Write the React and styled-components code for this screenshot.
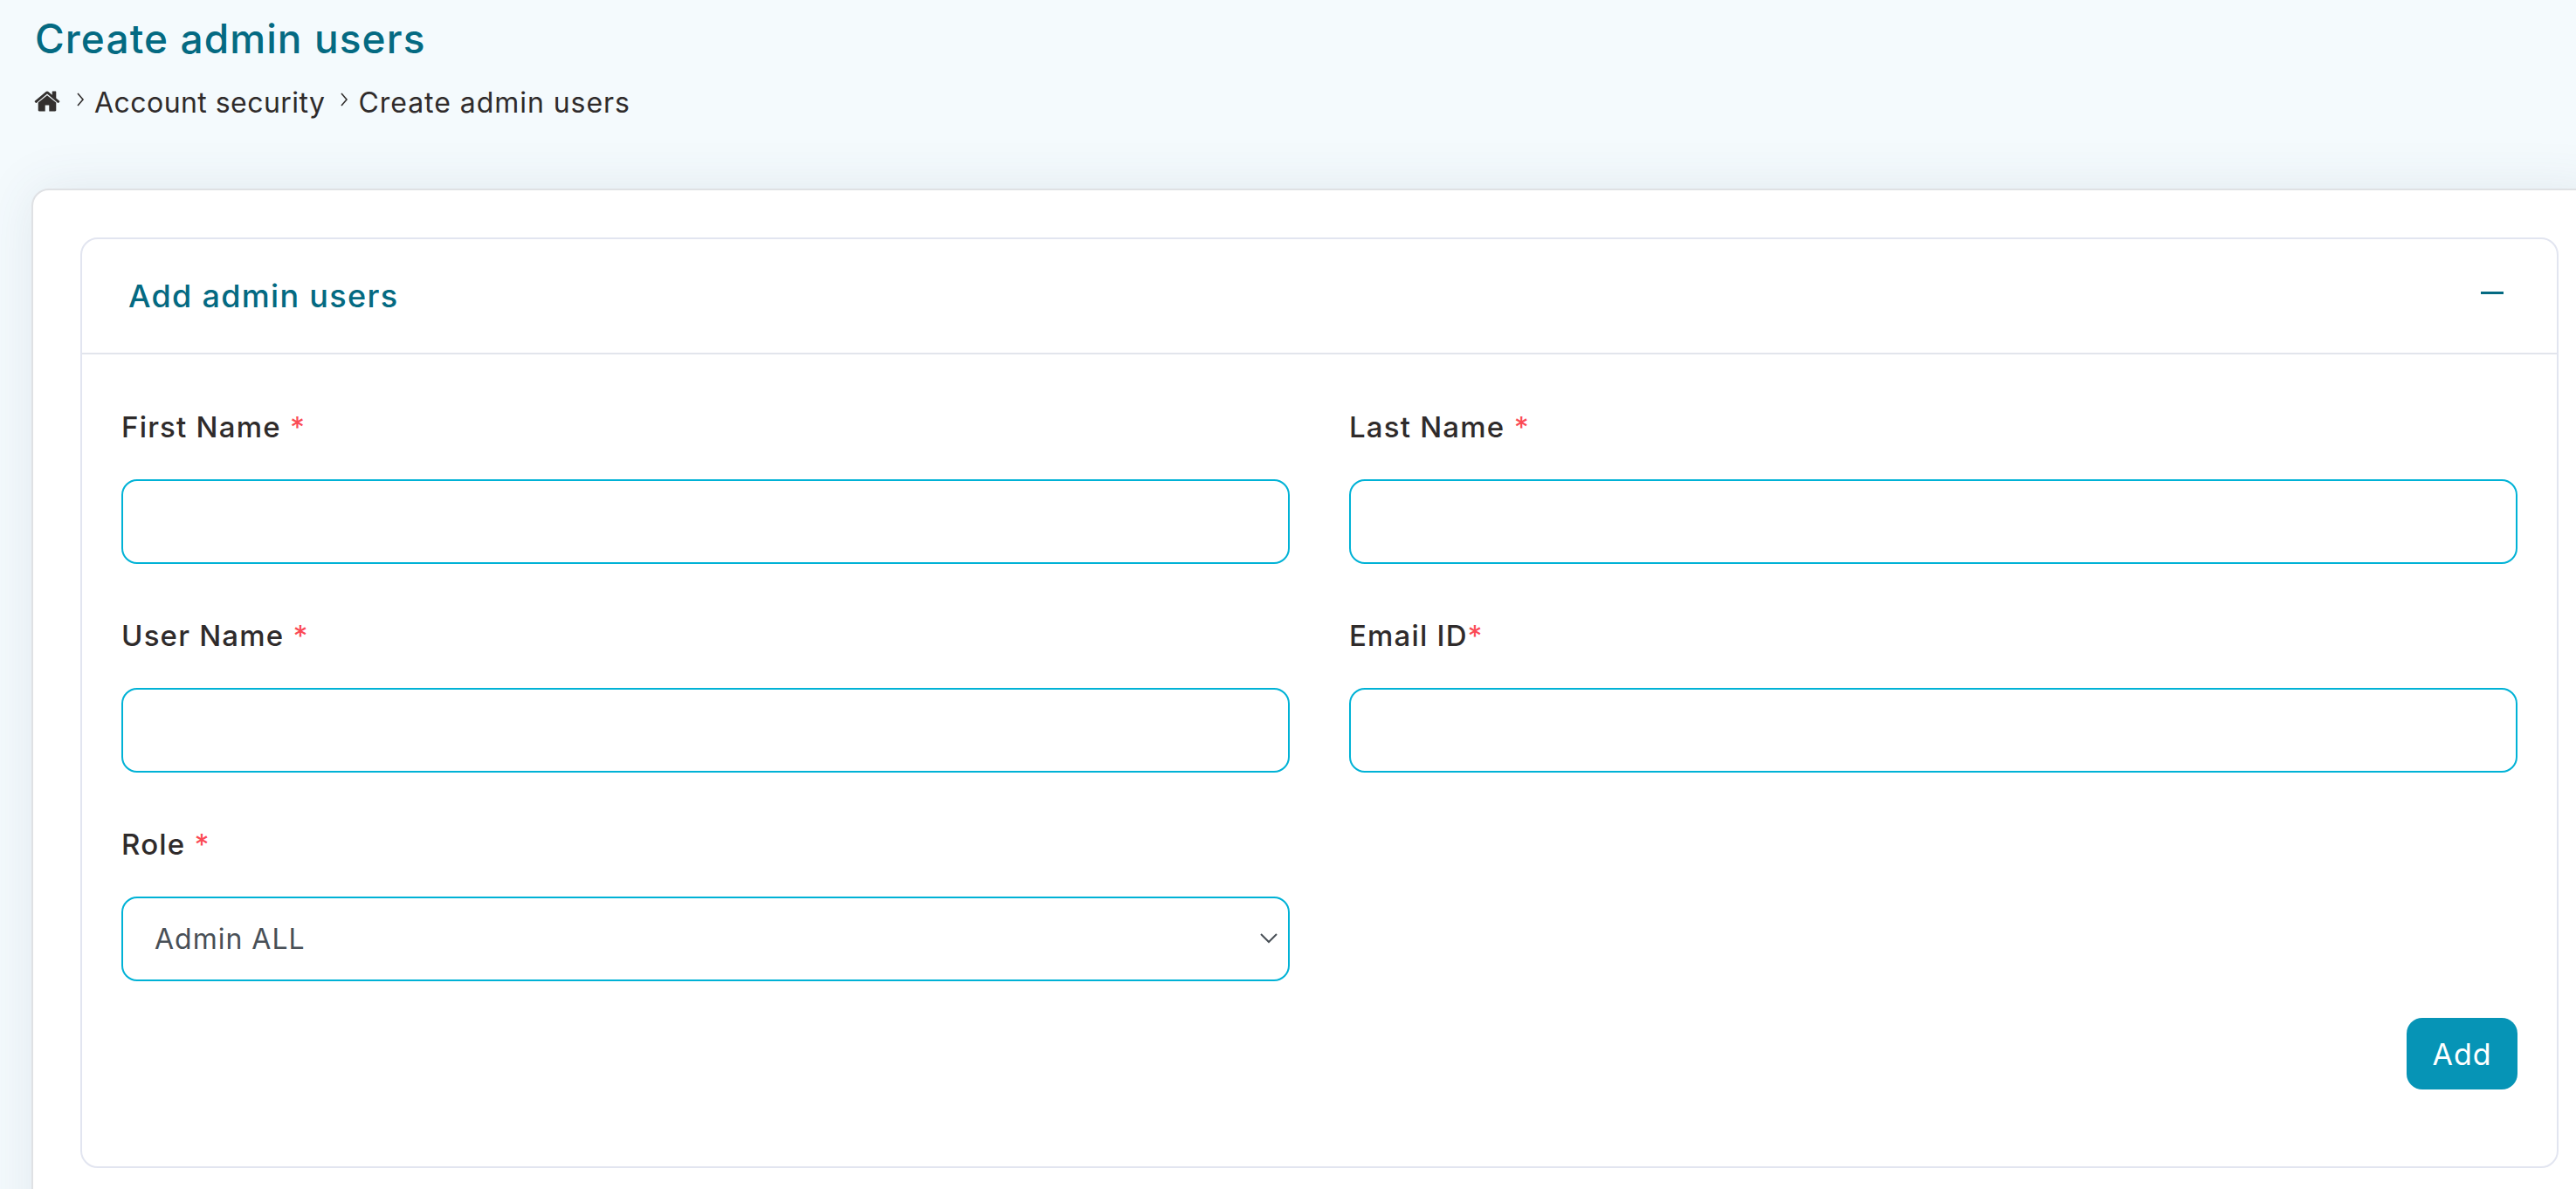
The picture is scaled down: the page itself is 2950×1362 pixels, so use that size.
import React from "react";
import styled, { createGlobalStyle } from "styled-components";

const GlobalStyle = createGlobalStyle`
    html, body {
        margin: 0;
        height: 100%;
        overflow: hidden;
        background: #f4fafd;
    }
    * {
        box-sizing: border-box;
    }
`;

const Page = styled.div`
    width: 2950px;
    height: 1362px;
    overflow: hidden;
    padding: 0 0 0 36px;
    font-family: Inter, "Noto Sans", sans-serif;
    color: #2f2b2b;
`;

const PageTitle = styled.h1`
    margin: 0;
    padding: 14px 0 0 4px;
    font-size: 46px;
    line-height: 60px;
    font-weight: 500;
    letter-spacing: 1.1px;
    color: #046a82;
`;

const Breadcrumb = styled.nav`
    display: flex;
    align-items: center;
    height: 40px;
    margin: 23px 0 0 2px;
    font-size: 32px;
`;

const Crumb = styled.span`
    letter-spacing: ${p => p.$spacing};
`;

const HomeIcon = styled.svg`
    width: 32px;
    height: 32px;
    margin-top: -2px;
    fill: #33302f;
`;

const Separator = styled.svg`
    width: 12px;
    height: 16px;
    margin: -6px 10px 0 16px;
    fill: none;
    stroke: #33302f;
    stroke-width: 1.6;
`;

const Panel = styled.section`
    width: 2950px;
    margin-top: 79px;
    padding: 54px;
    height: 1300px;
    background: #fff;
    border: 2px solid #dfe1e4;
    border-radius: 20px;
    box-shadow: 0 0 60px rgba(60, 80, 110, 0.1);
`;

const Card = styled.div`
    width: 2838px;
    background: #fff;
    border: 2px solid #e2e5f0;
    border-radius: 20px;
`;

const CardHeader = styled.header`
    display: flex;
    align-items: center;
    justify-content: space-between;
    height: 132px;
    padding: 0 61px 0 53px;
    border-bottom: 2px solid #e2e5ec;
`;

const CardTitle = styled.h2`
    margin: 0;
    font-size: 36px;
    font-weight: 500;
    letter-spacing: 1.3px;
    color: #046a82;
`;

const Collapse = styled.span`
    display: block;
    width: 26px;
    height: 3px;
    margin-bottom: 8px;
    background: #046a82;
`;

const CardBody = styled.form`
    padding: 61px 45px 88px;
`;

const FormGrid = styled.div`
    display: grid;
    grid-template-columns: 1338px 1338px;
    column-gap: 68px;
    row-gap: 60px;
`;

const Field = styled.div`
    display: flex;
    flex-direction: column;
`;

const Label = styled.label`
    display: block;
    height: 46px;
    margin-bottom: 36px;
    font-size: 33px;
    line-height: 44px;
    font-weight: 500;
    letter-spacing: 1.2px;
    color: #2f2b2b;
`;

const Required = styled.span`
    color: #fb4a55;
    font-weight: 400;
`;

const TextInput = styled.input`
    display: block;
    width: 100%;
    height: 97px;
    padding: 0 36px;
    background: #fff;
    border: 2px solid #00b2d6;
    border-radius: 18px;
    font: inherit;
    font-size: 32px;
    outline: none;
`;

const SelectWrap = styled.div`
    position: relative;
`;

const Select = styled.select`
    display: block;
    width: 100%;
    height: 97px;
    padding: 0 36px;
    appearance: none;
    background: #fff;
    border: 2px solid #00b2d6;
    border-radius: 18px;
    font-family: inherit;
    font-size: 32px;
    letter-spacing: 1px;
    color: #495057;
    outline: none;
`;

const Chevron = styled.svg`
    position: absolute;
    top: 42px;
    right: 14px;
    width: 20px;
    height: 12px;
    fill: none;
    stroke: #495057;
    stroke-width: 2;
    pointer-events: none;
`;

const Actions = styled.div`
    display: flex;
    justify-content: flex-end;
    margin-top: 42px;
`;

const AddButton = styled.button`
    width: 127px;
    height: 82px;
    padding: 0;
    background: #0694b6;
    border: none;
    border-radius: 18px;
    font-family: inherit;
    font-size: 34px;
    letter-spacing: 1px;
    color: #fff;
`;

const FIELDS = [
    { id: "first", label: "First Name", mark: " *" },
    { id: "last", label: "Last Name", mark: " *" },
    { id: "user", label: "User Name", mark: " *" },
    { id: "email", label: "Email ID", mark: "*" }
];

function ChevronRight() {
    return (
        <Separator viewBox="0 0 12 16">
            <path d="M3 1l6 7-6 7" />
        </Separator>
    );
}

export default function App() {
    return (
        <>
            <GlobalStyle />
            <Page>
                <PageTitle>Create admin users</PageTitle>
                <Breadcrumb>
                    <HomeIcon viewBox="0 0 1792 1792">
                        <path d="M1472 992v480q0 26-19 45t-45 19h-384v-384h-256v384h-384q-26 0-45-19t-19-45v-480q0-1 .5-3t.5-3l575-474 575 474q1 2 1 6zm223-69l-62 74q-8 9-21 11h-3q-13 0-21-7l-692-577-692 577q-12 8-24 7-13-2-21-11l-62-74q-8-10-7-23.5t11-21.5l719-599q32-26 76-26t76 26l244 204v-195q0-14 9-23t23-9h192q14 0 23 9t9 23v408l219 182q10 8 11 21.5t-7 23.5z" />
                    </HomeIcon>
                    <ChevronRight />
                    <Crumb $spacing="0.45px">Account security</Crumb>
                    <ChevronRight />
                    <Crumb $spacing="0.95px">Create admin users</Crumb>
                </Breadcrumb>
                <Panel>
                    <Card>
                        <CardHeader>
                            <CardTitle>Add admin users</CardTitle>
                            <Collapse />
                        </CardHeader>
                        <CardBody>
                            <FormGrid>
                                {FIELDS.map(field => (
                                    <Field key={field.id}>
                                        <Label htmlFor={field.id}>
                                            {field.label}
                                            <Required>{field.mark}</Required>
                                        </Label>
                                        <TextInput id={field.id} type="text" />
                                    </Field>
                                ))}
                                <Field>
                                    <Label htmlFor="role">
                                        Role<Required> *</Required>
                                    </Label>
                                    <SelectWrap>
                                        <Select id="role" defaultValue="all">
                                            <option value="all">Admin ALL</option>
                                        </Select>
                                        <Chevron viewBox="0 0 20 12">
                                            <path d="M1 1l9 9 9-9" />
                                        </Chevron>
                                    </SelectWrap>
                                </Field>
                            </FormGrid>
                            <Actions>
                                <AddButton type="button">Add</AddButton>
                            </Actions>
                        </CardBody>
                    </Card>
                </Panel>
            </Page>
        </>
    );
}
